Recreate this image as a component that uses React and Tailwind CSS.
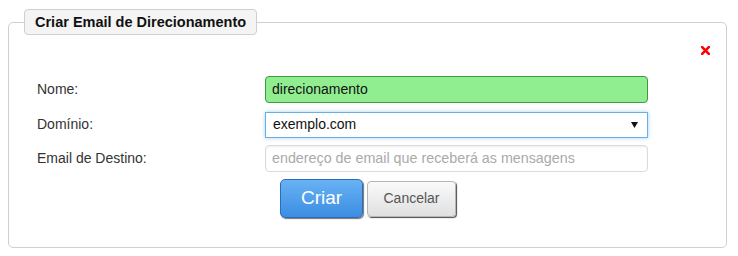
export default function App() {
  return (
    <div className="w-[738px] h-[256px] bg-white pt-[9px] pl-[8px] pr-[11px] font-['Liberation_Sans',Arial,sans-serif] text-[14px] text-[#333]">
      <fieldset className="h-[239px] border border-[#cfcfcf] rounded-[5px] p-0 m-0 min-w-0">
        <legend className="ml-[15px] h-[26px] px-[10px] border border-[#cfcfcf] rounded-[4px] bg-[#f4f4f4] text-[14.5px] font-bold text-[#111] leading-[24px]">
          Criar Email de Direcionamento
        </legend>
        <div className="flex justify-end pr-[16px] pt-[11px]">
          <svg width="9" height="9" viewBox="0 0 9 9" className="block">
            <path d="M1.2 1.2 L7.8 7.8 M7.8 1.2 L1.2 7.8" stroke="#ff0000" strokeWidth="2.6" strokeLinecap="square" />
          </svg>
        </div>
        <div className="pl-[28px] pt-[21px]">
          <div className="flex items-center h-[27px]">
            <div className="w-[228px]">Nome:</div>
            <div className="w-[383px] h-[27px] rounded-[4px] border border-[#3f9a3f] bg-[#90ee90] px-[6px] flex items-center text-[#111]">
              direcionamento
            </div>
          </div>
          <div className="flex items-center h-[27px] mt-[8px]">
            <div className="w-[228px]">Domínio:</div>
            <div className="w-[383px] h-[26px] border border-[#66afe9] shadow-[0_0_4px_rgba(102,175,233,0.6)] bg-white pl-[7px] pr-[9px] flex items-center justify-between text-[#111]">
              <span>exemplo.com</span>
              <svg width="7" height="6" viewBox="0 0 7 6" className="block">
                <path d="M0 0 H7 L3.5 6 Z" fill="#111" />
              </svg>
            </div>
          </div>
          <div className="flex items-center h-[27px] mt-[7px]">
            <div className="w-[228px]">Email de Destino:</div>
            <div className="w-[383px] h-[27px] rounded-[4px] border border-[#dcdcdc] shadow-[inset_0_1px_2px_rgba(0,0,0,0.08)] bg-white px-[6px] flex items-center text-[14.3px] text-[#aaaaaa]">
              endereço de email que receberá as mensagens
            </div>
          </div>
          <div className="flex items-center gap-[4px] pl-[243px] mt-[7px]">
            <div className="w-[83px] h-[39px] rounded-[5px] border border-[#2c6cb8] bg-gradient-to-b from-[#68b2f5] to-[#3b8de2] shadow-[1px_1px_1px_rgba(0,0,0,0.55)] flex items-center justify-center text-white text-[19px]">
              Criar
            </div>
            <div className="w-[89px] h-[36px] rounded-[4px] border border-[#b5b5b5] bg-gradient-to-b from-[#fafafa] to-[#e0e0e0] shadow-[1px_1px_1px_rgba(0,0,0,0.7)] flex items-center justify-center text-[#555] text-[14px]">
              Cancelar
            </div>
          </div>
        </div>
      </fieldset>
    </div>
  );
}
